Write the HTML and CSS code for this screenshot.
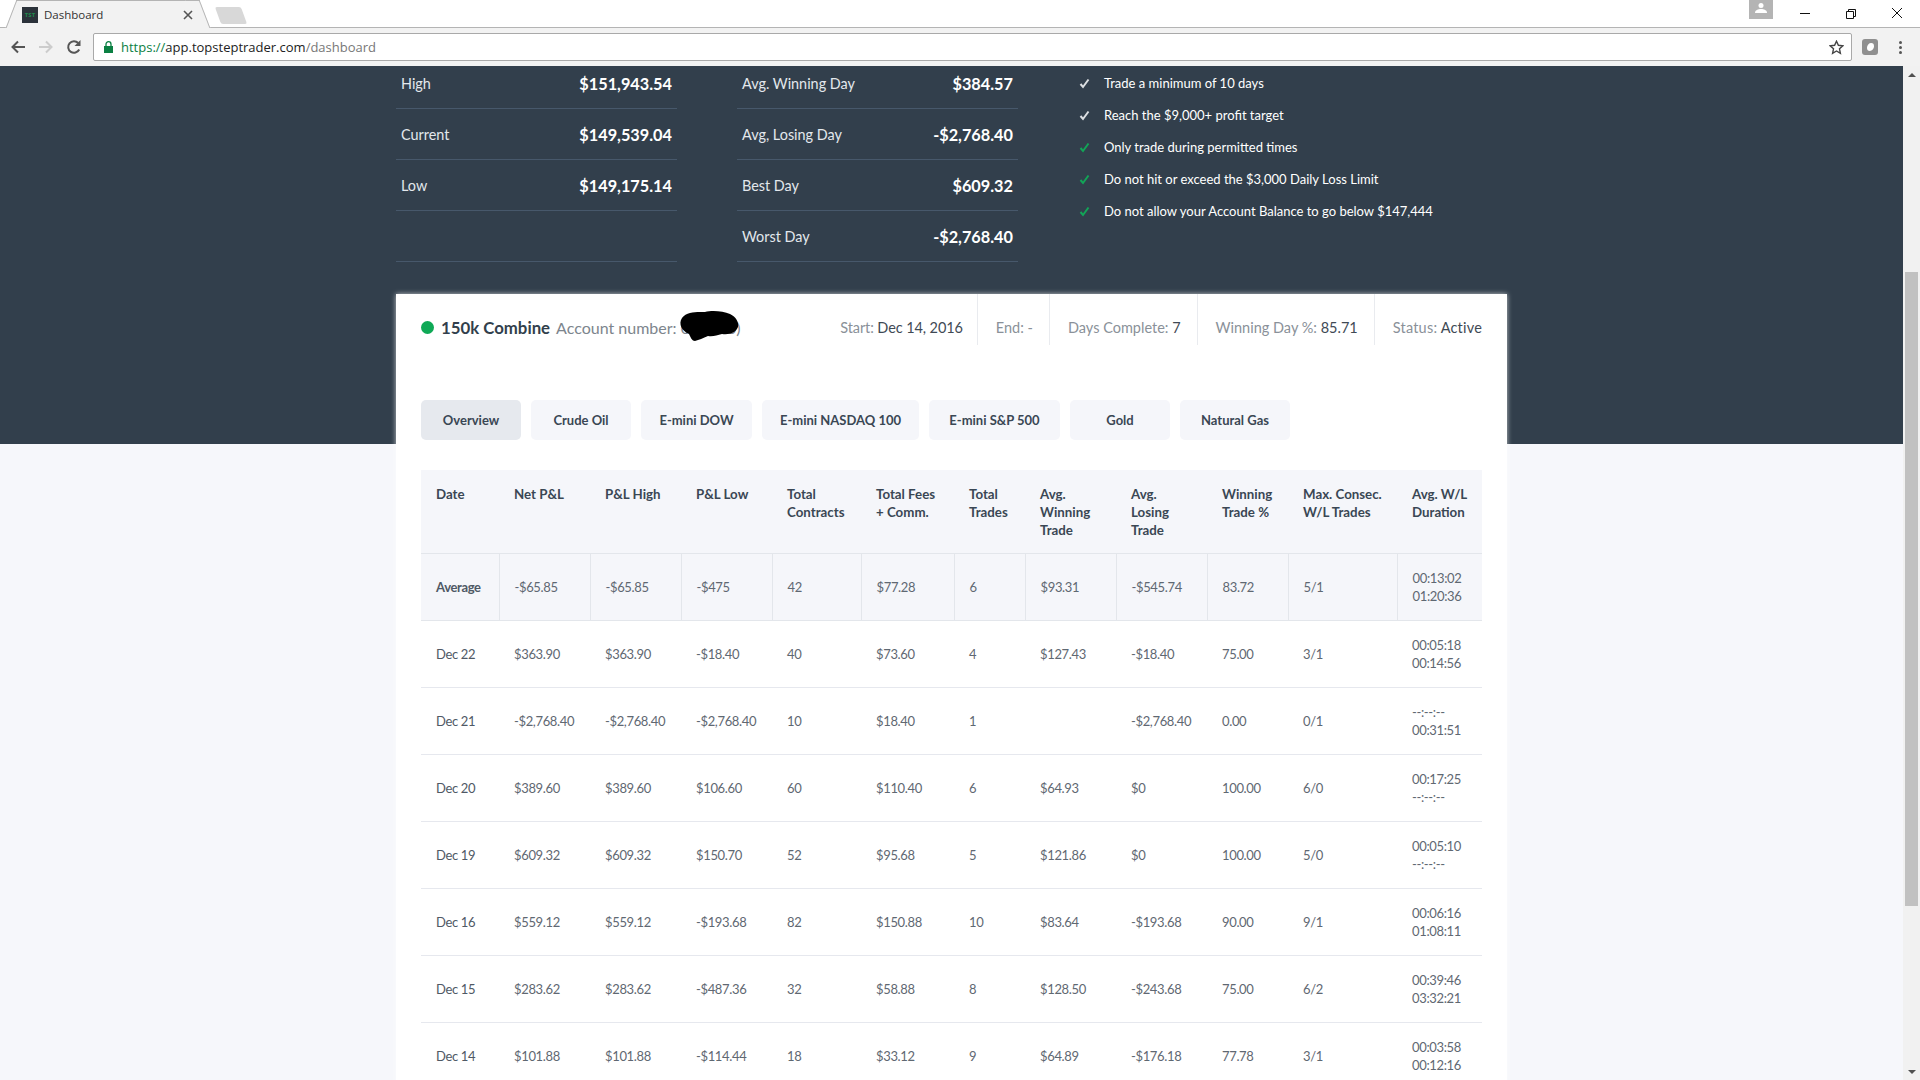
FILE: index.html
```html
<!DOCTYPE html>
<html lang="en">
<head>
    <meta charset="UTF-8">
    <title>Dashboard</title>
    <link rel="stylesheet" href="styles.css">
</head>
<body>

<div class="window">
    <!-- browser chrome -->
    <div class="tabstrip">
        <div class="tab">
            <span class="favicon">TST</span>
            <span class="tab-title">Dashboard</span>
            <svg class="tab-close" width="10" height="10" viewBox="0 0 10 10"><path d="M1 1l8 8M9 1l-8 8" stroke="#555" stroke-width="1.6"/></svg>
        </div>
        <div class="new-tab"></div>
        <div class="window-controls">
            <div class="avatar">
                <svg width="12" height="12" viewBox="0 0 12 12"><circle cx="6" cy="3.5" r="2.5" fill="#fff"/><path d="M0 11c0-3 3-4 6-4s6 1 6 4z" fill="#fff"/></svg>
            </div>
            <svg class="win-btn" width="46" height="28" viewBox="0 0 46 28"><path d="M18 13.5h10" stroke="#111" stroke-width="1"/></svg>
            <svg class="win-btn" width="46" height="28" viewBox="0 0 46 28"><path d="M18.5 11.5h7v7h-7zM20.5 11.5v-2h7v7h-2" fill="none" stroke="#111" stroke-width="1"/></svg>
            <svg class="win-btn" width="46" height="28" viewBox="0 0 46 28"><path d="M18 8l10 10M28 8L18 18" stroke="#111" stroke-width="1"/></svg>
        </div>
    </div>

    <div class="toolbar">
        <svg class="nav-icon" width="16" height="16" viewBox="0 0 16 16"><path d="M15 8H3M8 2.5L2.5 8 8 13.5" fill="none" stroke="#555" stroke-width="2"/></svg>
        <svg class="nav-icon" width="16" height="16" viewBox="0 0 16 16"><path d="M1 8h12M8 2.5L13.5 8 8 13.5" fill="none" stroke="#ccc" stroke-width="2"/></svg>
        <svg class="nav-icon" width="16" height="16" viewBox="0 0 16 16"><path d="M13.2 10.5A5.8 5.8 0 1 1 12.2 4" fill="none" stroke="#555" stroke-width="2"/><path d="M14.5 1v6h-6z" fill="#555"/></svg>
        <div class="omnibox">
            <svg class="lock" width="9" height="12" viewBox="0 0 9 12"><path d="M2 5V3.2a2.5 2.5 0 0 1 5 0V5" fill="none" stroke="#0b8043" stroke-width="1.3"/><rect y="5" width="9" height="7" fill="#0b8043"/></svg>
            <span class="url"><span class="url-scheme">https://</span>app.topsteptrader.com<span class="url-path">/dashboard</span></span>
            <svg class="star" width="15" height="15" viewBox="0 0 15 15"><path d="M7.5 1.2l1.9 4.1 4.4.5-3.3 3 .9 4.5-3.9-2.3-3.9 2.3.9-4.5-3.3-3 4.4-.5z" fill="none" stroke="#444" stroke-width="1.4"/></svg>
        </div>
        <div class="extension"><span class="extension-leaf"></span></div>
        <div class="menu-dots"><i></i><i></i><i></i></div>
    </div>

    <div class="viewport">
        <div class="page">
            <div class="hero">
                <div class="stats">
                    <div class="stat-col">
                        <div class="stat-row"><span>High</span><b>$151,943.54</b></div>
                        <div class="stat-row"><span>Current</span><b>$149,539.04</b></div>
                        <div class="stat-row"><span>Low</span><b>$149,175.14</b></div>
                        <div class="stat-row"></div>
                    </div>
                    <div class="stat-col">
                        <div class="stat-row"><span>Avg. Winning Day</span><b>$384.57</b></div>
                        <div class="stat-row"><span>Avg, Losing Day</span><b>-$2,768.40</b></div>
                        <div class="stat-row"><span>Best Day</span><b>$609.32</b></div>
                        <div class="stat-row"><span>Worst Day</span><b>-$2,768.40</b></div>
                    </div>
                    <ul class="rules">
                        <li><svg class="check" width="11" height="11" viewBox="0 0 11 11"><path d="M1.5 6l2.5 3L9.5 1.5" fill="none" stroke="currentColor" stroke-width="2"/></svg>Trade a minimum of 10 days</li>
                        <li><svg class="check" width="11" height="11" viewBox="0 0 11 11"><path d="M1.5 6l2.5 3L9.5 1.5" fill="none" stroke="currentColor" stroke-width="2"/></svg>Reach the $9,000+ profit target</li>
                        <li class="met"><svg class="check" width="11" height="11" viewBox="0 0 11 11"><path d="M1.5 6l2.5 3L9.5 1.5" fill="none" stroke="currentColor" stroke-width="2"/></svg>Only trade during permitted times</li>
                        <li class="met"><svg class="check" width="11" height="11" viewBox="0 0 11 11"><path d="M1.5 6l2.5 3L9.5 1.5" fill="none" stroke="currentColor" stroke-width="2"/></svg>Do not hit or exceed the $3,000 Daily Loss Limit</li>
                        <li class="met"><svg class="check" width="11" height="11" viewBox="0 0 11 11"><path d="M1.5 6l2.5 3L9.5 1.5" fill="none" stroke="currentColor" stroke-width="2"/></svg>Do not allow your Account Balance to go below $147,444</li>
                    </ul>
                </div>
            </div>

            <div class="card">
                <div class="card-head">
                    <div class="account">
                        <span class="dot"></span>
                        <strong>150k Combine</strong>
                        <span class="account-no">Account number: 000000)</span>
                        <svg class="scribble" width="62" height="32" viewBox="0 0 62 32"><path d="M4 8C9 1 20 2 27 2c7-2 18-1 25 2 6 3 9 8 8 13-2 5-7 8-16 7-5 1-9 3-14 2-5 2-9 4-13 5-3 0-4-3-6-7C4 21 0 14 4 8z" fill="#000"/></svg>
                    </div>
                    <div class="meta">
                        <div class="meta-item">Start: <b>Dec 14, 2016</b></div>
                        <div class="meta-item">End: -</div>
                        <div class="meta-item">Days Complete: <b>7</b></div>
                        <div class="meta-item">Winning Day %: <b>85.71</b></div>
                        <div class="meta-item">Status: <b>Active</b></div>
                    </div>
                </div>

                <div class="tabs">
                    <div class="pill active">Overview</div>
                    <div class="pill">Crude Oil</div>
                    <div class="pill">E-mini DOW</div>
                    <div class="pill">E-mini NASDAQ 100</div>
                    <div class="pill">E-mini S&amp;P 500</div>
                    <div class="pill">Gold</div>
                    <div class="pill">Natural Gas</div>
                </div>

                <table class="days">
                    <colgroup>
                        <col class="w-date"><col class="w-91"><col class="w-91"><col class="w-91"><col class="w-89"><col class="w-93"><col class="w-71"><col class="w-91"><col class="w-91"><col class="w-81"><col class="w-109"><col class="w-85">
                    </colgroup>
                    <thead>
                        <tr>
                            <th>Date</th><th>Net P&amp;L</th><th>P&amp;L High</th><th>P&amp;L Low</th><th>Total Contracts</th><th>Total Fees + Comm.</th><th>Total Trades</th><th>Avg. Winning Trade</th><th>Avg.<br>Losing<br>Trade</th><th>Winning Trade %</th><th>Max. Consec. W/L Trades</th><th>Avg. W/L Duration</th>
                        </tr>
                    </thead>
                    <tbody>
                        <tr class="average">
                            <td>Average</td><td>-$65.85</td><td>-$65.85</td><td>-$475</td><td>42</td><td>$77.28</td><td>6</td><td>$93.31</td><td>-$545.74</td><td>83.72</td><td>5/1</td><td>00:13:02<br>01:20:36</td>
                        </tr>
                        <tr>
                            <td>Dec 22</td><td>$363.90</td><td>$363.90</td><td>-$18.40</td><td>40</td><td>$73.60</td><td>4</td><td>$127.43</td><td>-$18.40</td><td>75.00</td><td>3/1</td><td>00:05:18<br>00:14:56</td>
                        </tr>
                        <tr>
                            <td>Dec 21</td><td>-$2,768.40</td><td>-$2,768.40</td><td>-$2,768.40</td><td>10</td><td>$18.40</td><td>1</td><td></td><td>-$2,768.40</td><td>0.00</td><td>0/1</td><td>--:--:--<br>00:31:51</td>
                        </tr>
                        <tr>
                            <td>Dec 20</td><td>$389.60</td><td>$389.60</td><td>$106.60</td><td>60</td><td>$110.40</td><td>6</td><td>$64.93</td><td>$0</td><td>100.00</td><td>6/0</td><td>00:17:25<br>--:--:--</td>
                        </tr>
                        <tr>
                            <td>Dec 19</td><td>$609.32</td><td>$609.32</td><td>$150.70</td><td>52</td><td>$95.68</td><td>5</td><td>$121.86</td><td>$0</td><td>100.00</td><td>5/0</td><td>00:05:10<br>--:--:--</td>
                        </tr>
                        <tr>
                            <td>Dec 16</td><td>$559.12</td><td>$559.12</td><td>-$193.68</td><td>82</td><td>$150.88</td><td>10</td><td>$83.64</td><td>-$193.68</td><td>90.00</td><td>9/1</td><td>00:06:16<br>01:08:11</td>
                        </tr>
                        <tr>
                            <td>Dec 15</td><td>$283.62</td><td>$283.62</td><td>-$487.36</td><td>32</td><td>$58.88</td><td>8</td><td>$128.50</td><td>-$243.68</td><td>75.00</td><td>6/2</td><td>00:39:46<br>03:32:21</td>
                        </tr>
                        <tr>
                            <td>Dec 14</td><td>$101.88</td><td>$101.88</td><td>-$114.44</td><td>18</td><td>$33.12</td><td>9</td><td>$64.89</td><td>-$176.18</td><td>77.78</td><td>3/1</td><td>00:03:58<br>00:12:16</td>
                        </tr>
                    </tbody>
                </table>
            </div>
        </div>

        <div class="scrollbar">
            <span class="arrow-up"></span>
            <div class="thumb"></div>
            <span class="arrow-down"></span>
        </div>
    </div>
</div>

</body>
</html>
```

FILE: styles.css
```css
html, body {
    margin: 0;
    height: 100%;
    overflow: hidden;
}
body {
    font-family: Lato, "Open Sans", sans-serif;
    font-size: 14px;
    color: #5f6872;
    background-color: #f6f7fb;
}
.window {
    height: 100vh;
    display: flex;
    flex-direction: column;
}

/* browser chrome */
.tabstrip {
    height: 28px;
    flex: none;
    display: flex;
    background-color: #fff;
    border-bottom: 1px solid #b4b4b4;
    box-sizing: border-box;
    font-family: "Open Sans", sans-serif;
}
.tab {
    position: relative;
    width: 180px;
    margin-left: 18px;
    height: 28px;
    margin-top: 0;
    box-sizing: border-box;
    padding-left: 4px;
    display: flex;
    align-items: center;
    background-color: #f2f2f2;
    border-top: 1px solid #b4b4b4;
}
/* slanted tab sides */
.tab::before, .tab::after {
    content: "";
    position: absolute;
    top: -1px;
    width: 14px;
    height: 28px;
    box-sizing: border-box;
    background-color: #f2f2f2;
    border-top: 1px solid #b4b4b4;
}
.tab::before {
    left: -7px;
    transform: skewX(-21deg);
    border-left: 1px solid #b4b4b4;
}
.tab::after {
    right: -7px;
    transform: skewX(21deg);
    border-right: 1px solid #b4b4b4;
}
.favicon {
    position: relative;
    z-index: 1;
    width: 16px;
    height: 16px;
    background-color: #2b323a;
    color: #1f8a4d;
    font-size: 6px;
    font-weight: 700;
    line-height: 16px;
    text-align: center;
}
.tab-title {
    margin-left: 6px;
    font-size: 11.5px;
    color: #333;
}
.tab-close {
    position: relative;
    z-index: 1;
    margin-left: auto;
    margin-right: 5px;
}
.new-tab {
    width: 26px;
    height: 17px;
    margin: 7px 0 0 20px;
    background-color: #d8d8d8;
    transform: skewX(20deg);
    border-radius: 2px;
}
.window-controls {
    margin-left: auto;
    display: flex;
}
.avatar {
    width: 24px;
    height: 19px;
    margin-right: 9px;
    background-color: #b4b4b4;
    display: flex;
    justify-content: center;
    padding-top: 2px;
    box-sizing: border-box;
}
.win-btn {
    display: block;
}
.toolbar {
    height: 38px;
    flex: none;
    display: flex;
    align-items: center;
    background-color: #f2f2f2;
    box-sizing: border-box;
    padding-left: 10px;
    font-family: "Open Sans", sans-serif;
}
.nav-icon {
    margin-right: 12px;
    flex: none;
}
.nav-icon:nth-child(3) {
    margin-right: 11px;
}
.omnibox {
    width: 1759px;
    height: 28px;
    flex: none;
    box-sizing: border-box;
    display: flex;
    align-items: center;
    background-color: #fff;
    border: 1px solid #a9a9a9;
    border-radius: 2px;
    padding: 0 7px 0 10px;
}
.url {
    margin-left: 8px;
    font-size: 13px;
    color: #222;
}
.url-scheme {
    color: #0b8043;
}
.url-path {
    color: #777;
}
.star {
    margin-left: auto;
}
.extension {
    width: 16px;
    height: 16px;
    margin-left: 10px;
    border-radius: 3px;
    background-color: #8f8f8f;
    display: flex;
    align-items: center;
    justify-content: center;
}
.extension-leaf {
    width: 7px;
    height: 8px;
    background-color: #fff;
    border-radius: 60% 40% 60% 40%;
}
.menu-dots {
    margin-left: 21px;
    display: flex;
    flex-direction: column;
    gap: 2px;
}
.menu-dots i {
    width: 3px;
    height: 3px;
    border-radius: 50%;
    background-color: #555;
}

/* page */
.viewport {
    flex: 1;
    display: flex;
    min-height: 0;
}
.page {
    flex: 1;
    min-width: 0;
    overflow: hidden;
}
.hero {
    height: 378px;
    background-color: #323f4c;
    overflow: hidden;
}
.stats {
    width: 1111px;
    margin: -8px auto 0;
    display: flex;
    align-items: flex-start;
}
.stat-col {
    width: 281px;
    margin-right: 60px;
    flex: none;
}
.stat-row {
    height: 51px;
    box-sizing: border-box;
    padding: 0 5px;
    display: flex;
    align-items: center;
    justify-content: space-between;
    border-bottom: 1px solid #47586b;
    color: #e3e8ed;
    font-size: 14.4px;
}
.stat-row b {
    color: #fff;
    font-size: 16.3px;
    font-weight: 700;
}
.rules {
    list-style: none;
    margin: 9px 0 0;
    padding: 0 0 0 1px;
}
.rules li {
    height: 32px;
    display: flex;
    align-items: center;
    color: #fff;
    font-size: 13px;
}
.check {
    margin-right: 14px;
    color: #dcdfe2;
}
.met .check {
    color: #12a557;
}
.card {
    position: relative;
    width: 1111px;
    margin: -150px auto 0;
    box-sizing: border-box;
    padding: 0 25px 0;
    background-color: #fff;
    box-shadow: 0 0 5px rgba(255, 255, 255, 0.7);
}
.card-head {
    height: 106px;
    display: flex;
    align-items: flex-start;
    justify-content: space-between;
}
.account {
    position: relative;
    height: 66px;
    display: flex;
    align-items: center;
    font-size: 16px;
}
.dot {
    width: 13px;
    height: 13px;
    border-radius: 50%;
    background-color: #0fa956;
    margin-right: 7px;
}
.account strong {
    color: #323f4c;
    font-size: 16.8px;
    font-weight: 700;
    margin-right: 6px;
}
.account-no {
    color: #7d858d;
}
.scribble {
    position: absolute;
    left: 257px;
    top: 16px;
}
.meta {
    display: flex;
    height: 51px;
}
.meta-item {
    padding: 25px 16px 0 18px;
    border-left: 1px solid #e9ebef;
    color: #8a9199;
    font-size: 14.5px;
    white-space: nowrap;
}
.meta-item:first-child {
    border-left: none;
    padding-right: 14px;
    letter-spacing: -0.1px;
}
.meta-item:last-child {
    padding-right: 0;
    letter-spacing: 0.2px;
}
.meta-item b {
    color: #3f4a55;
    font-weight: 400;
}
.tabs {
    display: flex;
    gap: 10px;
}
.pill {
    height: 40px;
    width: 100px;
    flex: none;
    display: flex;
    align-items: center;
    justify-content: center;
    border-radius: 5px;
    background-color: #f5f6fa;
    color: #3a4754;
    font-size: 13px;
    font-weight: 700;
    white-space: nowrap;
}
.pill:nth-child(3) { width: 111px; }
.pill:nth-child(4) { width: 157px; }
.pill:nth-child(5) { width: 131px; }
.pill:nth-child(7) { width: 110px; }
.pill.active {
    background-color: #e6e9ee;
}
.days {
    width: 1061px;
    margin-top: 30px;
    table-layout: fixed;
    border-collapse: collapse;
    font-size: 13px;
    letter-spacing: -0.35px;
}
.w-date { width: 78px; }
.w-71 { width: 71px; }
.w-81 { width: 81px; }
.w-85 { width: 85px; }
.w-89 { width: 89px; }
.w-91 { width: 91px; }
.w-93 { width: 93px; }
.w-109 { width: 109px; }
.days th {
    height: 83px;
    box-sizing: border-box;
    padding: 15px 8px 0 15px;
    vertical-align: top;
    text-align: left;
    line-height: 18px;
    font-weight: 700;
    font-size: 13.3px;
    letter-spacing: 0;
    color: #3a4754;
    background-color: #f5f6fa;
    border-bottom: 1px solid #e3e6eb;
}
.days td {
    height: 67px;
    box-sizing: border-box;
    padding: 0 0 0 15px;
    line-height: 18px;
    border-bottom: 1px solid #e6e8ee;
    white-space: nowrap;
}
.average td {
    background-color: #f5f6fa;
    border-right: 1px solid #e3e6eb;
    border-bottom-color: #e3e6eb;
}
.average td:last-child {
    border-right: none;
}
.average td:first-child {
    font-weight: 700;
    color: #3a4754;
}
.days td:first-child {
    color: #4f5965;
}

/* scrollbar */
.scrollbar {
    width: 17px;
    flex: none;
    position: relative;
    background-color: #f1f1f1;
}
.thumb {
    position: absolute;
    top: 206px;
    left: 2px;
    width: 13px;
    height: 634px;
    background-color: #c1c1c1;
}
.arrow-up, .arrow-down {
    position: absolute;
    left: 5px;
    width: 0;
    height: 0;
    border-left: 4px solid transparent;
    border-right: 4px solid transparent;
}
.arrow-up {
    top: 7px;
    border-bottom: 4px solid #505050;
}
.arrow-down {
    bottom: 6px;
    border-top: 4px solid #505050;
}
```
